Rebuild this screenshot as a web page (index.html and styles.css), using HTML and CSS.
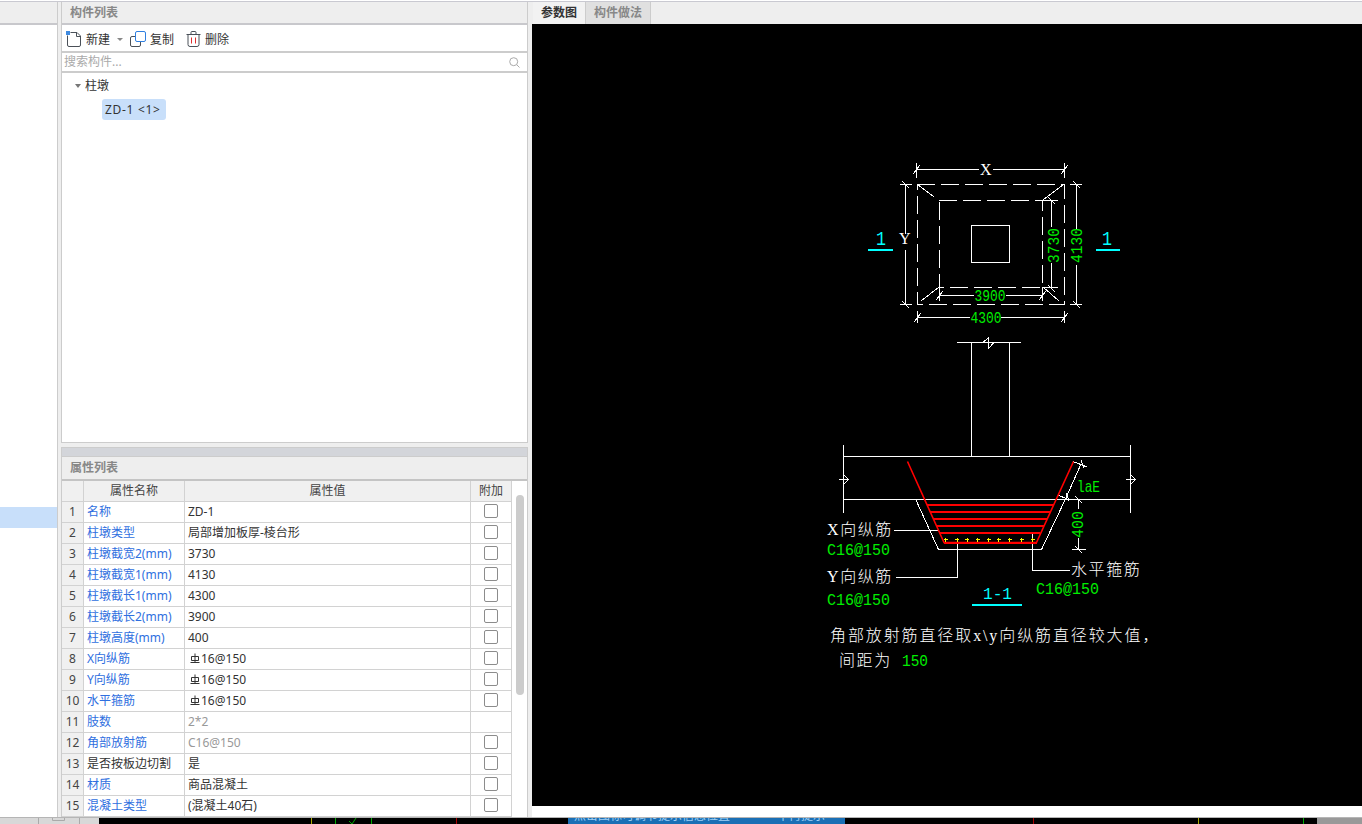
FILE: index.html
```html
<!DOCTYPE html>
<html lang="zh-CN">
<head>
<meta charset="utf-8">
<title>构件列表</title>
<link rel="stylesheet" href="styles.css">
</head>
<body>
<div class="main">
  <aside class="side">
    <div class="side-head"></div>
    <div class="side-body"><div class="side-sel"></div></div>
  </aside>
  <section class="center">
    <div class="list-panel">
      <div class="title">构件列表</div>
      <div class="toolbar">
        <svg class="ico" width="16" height="16" viewBox="0 0 16 16"><path class="ln" d="M1.5 4.5V14a1.5 1.5 0 0 0 1.5 1.5h10a1.5 1.5 0 0 0 1.5-1.5V5L11 1.5H4.5"/><path class="ln" d="M10.5 1.5V5.5H14.5"/><rect class="bl" x="0" y="0" width="4" height="4"/></svg>
        <span class="tool-label">新建</span>
        <span class="caret"></span>
        <svg class="ico copy-ico" width="16" height="16" viewBox="0 0 16 16"><path class="ln" d="M5 5.500H2a1.500 1.500 0 0 0-1.500 1.500v7A1.500 1.500 0 0 0 2 15.500h7a1.500 1.500 0 0 0 1.500-1.500v-3"/><rect class="blue-ln" x="5.500" y="0.500" width="10" height="10" rx="1.500"/></svg>
        <span class="tool-label">复制</span>
        <svg class="ico trash-ico" width="15" height="16" viewBox="0 0 15 16"><path class="ln" d="M0.500 3.500H14.500M5 3.500V1.500a1 1 0 0 1 1-1h3a1 1 0 0 1 1 1v2M2 3.500V13.500a2 2 0 0 0 2 2h7a2 2 0 0 0 2-2V3.500"/><path class="red-ln" d="M5.500 6.500V12.500M9.500 6.500V12.500"/></svg>
        <span class="tool-label">删除</span>
      </div>
      <div class="search">
        <span class="placeholder">搜索构件...</span>
        <svg width="11" height="11" viewBox="0 0 11 11"><circle class="sr" cx="4.700" cy="4.700" r="4"/><path class="sr" d="M7.700 7.700L10.500 10.500"/></svg>
      </div>
      <div class="tree">
        <div class="tree-root"><span class="tree-caret"></span>柱墩</div>
        <div class="tree-item"><span class="chip">ZD-1 &lt;1&gt;</span></div>
      </div>
    </div>
    <div class="divider"></div>
    <div class="prop-panel">
      <div class="title">属性列表</div>
      <div class="prop-body">
        <table class="props">
          <colgroup><col class="c-n"><col class="c-name"><col class="c-val"><col class="c-add"></colgroup>
          <thead><tr><th></th><th>属性名称</th><th>属性值</th><th>附加</th></tr></thead>
          <tbody>
            <tr><td class="n">1</td><td class="k">名称</td><td>ZD-1</td><td class="a"><span class="cb"></span></td></tr>
            <tr><td class="n">2</td><td class="k">柱墩类型</td><td>局部增加板厚-棱台形</td><td class="a"><span class="cb"></span></td></tr>
            <tr><td class="n">3</td><td class="k">柱墩截宽2(mm)</td><td>3730</td><td class="a"><span class="cb"></span></td></tr>
            <tr><td class="n">4</td><td class="k">柱墩截宽1(mm)</td><td>4130</td><td class="a"><span class="cb"></span></td></tr>
            <tr><td class="n">5</td><td class="k">柱墩截长1(mm)</td><td>4300</td><td class="a"><span class="cb"></span></td></tr>
            <tr><td class="n">6</td><td class="k">柱墩截长2(mm)</td><td>3900</td><td class="a"><span class="cb"></span></td></tr>
            <tr><td class="n">7</td><td class="k">柱墩高度(mm)</td><td>400</td><td class="a"><span class="cb"></span></td></tr>
            <tr><td class="n">8</td><td class="k">X向纵筋</td><td><svg class="rebar" width="10" height="11" viewBox="0 0 10 11"><path class="rb" d="M1.500 3.500H8.500V7.500H1.500ZM5 0.500V9.500M0.500 9.500H9.500"/></svg>16@150</td><td class="a"><span class="cb"></span></td></tr>
            <tr><td class="n">9</td><td class="k">Y向纵筋</td><td><svg class="rebar" width="10" height="11" viewBox="0 0 10 11"><path class="rb" d="M1.500 3.500H8.500V7.500H1.500ZM5 0.500V9.500M0.500 9.500H9.500"/></svg>16@150</td><td class="a"><span class="cb"></span></td></tr>
            <tr><td class="n">10</td><td class="k">水平箍筋</td><td><svg class="rebar" width="10" height="11" viewBox="0 0 10 11"><path class="rb" d="M1.500 3.500H8.500V7.500H1.500ZM5 0.500V9.500M0.500 9.500H9.500"/></svg>16@150</td><td class="a"><span class="cb"></span></td></tr>
            <tr><td class="n">11</td><td class="k">肢数</td><td class="muted">2*2</td><td class="a"></td></tr>
            <tr><td class="n">12</td><td class="k">角部放射筋</td><td class="muted">C16@150</td><td class="a"><span class="cb"></span></td></tr>
            <tr><td class="n">13</td><td class="k plain">是否按板边切割</td><td>是</td><td class="a"><span class="cb"></span></td></tr>
            <tr><td class="n">14</td><td class="k">材质</td><td>商品混凝土</td><td class="a"><span class="cb"></span></td></tr>
            <tr><td class="n">15</td><td class="k">混凝土类型</td><td>(混凝土40石)</td><td class="a"><span class="cb"></span></td></tr>
          </tbody>
        </table>
        <div class="scroll"><div class="thumb"></div></div>
      </div>
    </div>
  </section>
  <section class="right">
    <div class="tabs"><span class="tab active">参数图</span><span class="tab">构件做法</span></div>
    <svg class="canvas" width="830" height="782" viewBox="532 24 830 782">
      <g class="w">
        <path class="dash" d="M917 184H1064V304H917Z"/>
        <path class="dash" d="M939 200H1042V287H939Z"/>
        <rect x="971.500" y="225.500" width="38" height="37"/>
        <path d="M917 184L934 197M1063 185L1043 200M921 301L939 287M1043 287L1059 301"/>
        <path d="M917 169.500H979M993 169.500H1064M916.500 163V178M1064.500 163V178M913 174L920 165M1061 174L1068 165"/>
        <path d="M905.500 184V234M905.500 250V304M900 184.500H912M900 304.500H912M902 181L909 188M902 301L909 308"/>
        <path d="M1051.500 200V227M1051.500 263V288M1042 200.500H1058M1042 287.500H1058M1048 197L1055 204M1048 285L1055 292"/>
        <path d="M1076.500 184V229M1076.500 265V304M1070 184.500H1082M1070 304.500H1082M1073 181L1080 188M1073 301L1080 308"/>
        <path d="M939 295.500H974M1006 295.500H1042M939.500 288V301M1042.500 288V301M936 300L943 291M1039 300L1046 291"/>
        <path d="M917 317.500H970M1001 317.500H1064M917.500 311V323M1064.500 311V323M914 322L921 313M1061 322L1068 313"/>
        <path d="M971.500 342V456M1009.500 342V456M957 342.500H1021M983 342.500L988.500 337.500V348.500L994 342.500"/>
        <path d="M843.500 445V513M1130.500 445V513M843 456.500H1131M843 499.500H1131"/>
        <path d="M839 479.500H848.500L844 484M844 475L848.500 479.500M1126 479.500H1135.500L1131 484M1131 475L1135.500 479.500"/>
        <path d="M915.500 499L938.500 549.500H1041.500L1065.500 499L1081 464"/>
        <path d="M1073 461.500L1077 463L1087 467M1081 460L1084 468M1058 495L1067 499M1066 493L1069 501"/>
        <path d="M1078.500 499V509M1078.500 538V549M1072 499.500H1086M1072 549.500H1086M1075 496L1082 503M1075 546L1082 553"/>
        <path d="M894 530.500H939M896 577.500H957.500V539M1032.500 533V570.500H1070"/>
      </g>
      <path class="red" d="M907.500 461.500L944 542.500H1036.500L1073.500 461.500"/>
      <path class="red thick" d="M926.500 505H1054M930 512H1050M933.500 519H1046.500M936.500 526H1043.500M940 533H1040M944 542.500H1036.500"/>
      <path class="yel" d="M943.500 539.500h4M945.500 537.500v4M955 539.500h4M957 537.500v4M965 539.500h4M967 537.500v4M975.500 539.500h4M977.500 537.500v4M986.500 539.500h4M988.500 537.500v4M996.500 539.500h4M998.500 537.500v4M1007.500 539.500h4M1009.500 537.500v4M1019.500 539.500h4M1021.500 537.500v4M1030.500 539.500h4M1032.500 537.500v4"/>
      <path class="cy" d="M868 249.500H893M1096 249.500H1120M972 605H1022"/>
      <text class="serif white" x="980" y="175">X</text>
      <text class="serif white" x="899" y="244">Y</text>
      <text class="mono green" x="974.500" y="301" textLength="31" lengthAdjust="spacingAndGlyphs">3900</text>
      <text class="mono green" x="970.500" y="323" textLength="31" lengthAdjust="spacingAndGlyphs">4300</text>
      <text class="mono green rot-a" textLength="35" lengthAdjust="spacingAndGlyphs">3730</text>
      <text class="mono green rot-b" textLength="35" lengthAdjust="spacingAndGlyphs">4130</text>
      <text class="mono green rot-c" textLength="27" lengthAdjust="spacingAndGlyphs">400</text>
      <text class="big cyan" x="876" y="245" textLength="10" lengthAdjust="spacingAndGlyphs">1</text>
      <text class="big cyan" x="1102" y="245" textLength="10" lengthAdjust="spacingAndGlyphs">1</text>
      <text class="mono cyan" x="983" y="599" textLength="29" lengthAdjust="spacingAndGlyphs">1-1</text>
      <text class="mono green" x="1077" y="492" textLength="23" lengthAdjust="spacingAndGlyphs">laE</text>
      <text class="cad white" x="827" y="535">X向纵筋</text>
      <text class="mono green" x="827" y="555" textLength="63" lengthAdjust="spacingAndGlyphs">C16@150</text>
      <text class="cad white" x="827" y="582">Y向纵筋</text>
      <text class="mono green" x="827" y="605" textLength="63" lengthAdjust="spacingAndGlyphs">C16@150</text>
      <text class="cad white" x="1071" y="575">水平箍筋</text>
      <text class="mono green" x="1036" y="594" textLength="63" lengthAdjust="spacingAndGlyphs">C16@150</text>
      <text class="cad white" x="830" y="641" textLength="330">角部放射筋直径取x\y向纵筋直径较大值，</text>
      <text class="cad white" x="839" y="666">间距为</text>
      <text class="mono green" x="902" y="666" textLength="26" lengthAdjust="spacingAndGlyphs">150</text>
    </svg>
    <div class="right-foot"></div>
  </section>
</div>
<svg class="strip" width="1362" height="6" viewBox="0 0 1362 6">
  <rect class="s-bg" x="0" y="0" width="1362" height="6"/>
  <rect class="s-gray" x="0" y="0" width="99" height="6"/>
  <path class="s-sep" d="M38.500 0V6M79.500 0V6M52.500 0V2.500H64.500V0"/>
  <path class="s-yel" d="M311.500 0V6M1198.500 0V6"/>
  <path class="s-grn" d="M335.500 0V6M371.500 0V6M1303.500 0V6M349 3L352 6L356 0"/>
  <path class="s-red" d="M456.500 0V6M1033.500 0V6"/>
  <rect class="s-blue" x="568" y="0" width="277" height="6"/>
  <text class="s-text" x="574" y="2">点击图标可调节提示信息位置~</text>
  <text class="s-text" x="777" y="2">不再提示</text>
  <rect class="s-gray2" x="1317" y="0" width="45" height="6"/>
</svg>
</body>
</html>
```
FILE: styles.css
```css
* { box-sizing: border-box; }
html, body { margin: 0; padding: 0; }
body {
  width: 1362px;
  height: 824px;
  overflow: hidden;
  background: #fff;
  padding-top: 1px;
  font: 12px/1.2 "Noto Sans", "Noto Sans CJK SC", sans-serif;
  color: #333;
}
.main {
  display: flex;
  height: 817px;
  background: #eee;
  border-top: 1px solid #c9c9d1;
  border-bottom: 1px solid #b5b5b5;
}
.side {
  width: 58px;
  display: flex;
  flex-direction: column;
  border-right: 1px solid #ccc;
  margin-right: 3px;
}
.side-head { background: #eee; border-bottom: 2px solid #c8c8cc; height: 23px; }
.side-body { flex: 1; background: #fff; padding-top: 482px; }
.side-sel { height: 21px; background: #c8dffa; }
.center { width: 467px; display: flex; flex-direction: column; margin-right: 4px; }
.title {
  height: 23px;
  padding-left: 8px;
  background: #eee;
  border-bottom: 2px solid #c8c8cc;
  color: #888;
  font-weight: 700;
  line-height: 22px;
}
.list-panel {
  height: 441px;
  display: flex;
  flex-direction: column;
  border: 1px solid #ccc;
  border-top: 0;
}
.toolbar {
  height: 28px;
  flex: none;
  display: flex;
  align-items: center;
  padding: 2px 0 0 4px;
  background: #fff;
  border-bottom: 2px solid #ccc;
  color: #333;
}
.ico { flex: none; }
.tool-label { margin-left: 4px; padding-top: 2px; }
.caret {
  width: 0; height: 0;
  margin-left: 7px;
  border: 3px solid transparent;
  border-top: 3px solid #888;
  border-bottom: 0;
}
.copy-ico { margin-left: 7px; }
.trash-ico { margin-left: 12px; }
.ln { fill: none; stroke: #4a5058; stroke-width: 1; }
.bl { fill: #3f8ae0; }
.blue-ln { fill: #fff; stroke: #2f7fe0; stroke-width: 1; }
.red-ln { fill: none; stroke: #e03030; stroke-width: 1; }
.search {
  height: 20px;
  flex: none;
  display: flex;
  align-items: center;
  justify-content: space-between;
  padding: 0 7px 0 2px;
  background: #fff;
  border-bottom: 2px solid #ccc;
}
.placeholder { color: #aaa; }
.sr { fill: none; stroke: #aaa; stroke-width: 1; }
.tree { flex: 1; background: #fff; }
.tree-root {
  display: flex;
  align-items: center;
  height: 26px;
  padding-left: 13px;
  color: #333;
}
.tree-caret {
  width: 0; height: 0;
  margin-right: 4px;
  border: 3.500px solid transparent;
  border-top: 4px solid #777;
  border-bottom: 0;
}
.tree-item { padding-left: 40px; }
.chip {
  display: inline-block;
  height: 21px;
  width: 64px;
  padding-left: 3px;
  line-height: 21px;
  letter-spacing: 0.700px;
  background: #c8dffa;
  border-radius: 3px;
  white-space: pre;
}
.divider {
  flex: none;
  margin-top: 4px;
  background: #d3d5da;
  border: 1px solid #ccc;
  height: 10px;
}
.prop-panel {
  flex: 1;
  display: flex;
  flex-direction: column;
  border: 1px solid #ccc;
  border-width: 0 1px;
}
.prop-panel .title { height: 24px; line-height: 22px; border-bottom-color: #c4c4c4; }
.prop-body { flex: 1; display: flex; background: #fff; }
.props {
  width: 450px;
  flex: none;
  table-layout: fixed;
  border-collapse: separate;
  border-spacing: 0;
}
.c-n { width: 22px; }
.c-name { width: 101px; }
.c-val { width: 286px; }
.c-add { width: 41px; }
.props th, .props td {
  height: 21px;
  padding: 0;
  border-right: 1px solid #d2d2d2;
  border-bottom: 1px solid #d2d2d2;
  font-size: 12px;
  line-height: 20px;
  white-space: nowrap;
  overflow: hidden;
}
.props th { background: #f0f0f0; font-weight: 400; color: #444; text-align: center; }
.props td { padding-left: 3px; color: #333; }
.props td.n { background: #f0f0f0; padding: 0; text-align: center; color: #444; }
.props td.k { padding-left: 3px; color: #2f6fe0; }
.props td.k.plain { color: #333; }
.props td.muted { color: #999; }
.props td.a { padding: 0; text-align: center; }
.cb {
  display: inline-block;
  width: 14px;
  height: 14px;
  margin-top: 2px;
  vertical-align: top;
  background: #fff;
  border: 1px solid #8c8c8c;
  border-radius: 2px;
}
.rebar { margin: 0 1px 0 2px; vertical-align: -1px; }
.rb { fill: none; stroke: #333; stroke-width: 1; }
.scroll { flex: 1; padding: 14px 0 0 4px; }
.thumb { width: 8px; height: 200px; background: #ccc; border-radius: 4px; }
.right { flex: 1; display: flex; flex-direction: column; min-width: 0; }
.tabs { height: 22px; display: flex; background: #eee; padding-left: 1px; }
.tab {
  width: 53px;
  background: #e0e0e0;
  border-right: 1px solid #ccc;
  color: #888;
  font-weight: 700;
  text-align: center;
  line-height: 22px;
}
.tab + .tab { width: 65px; }
.tab.active { background: #f2f2f2; color: #333; }
.canvas { display: block; flex: none; background: #000; }
.right-foot { flex: 1; background: #fff; }
.w { fill: none; stroke: #fff; stroke-width: 1; shape-rendering: crispEdges; }
.dash { stroke-dasharray: 18 6; }
.red { fill: none; stroke: #f00; stroke-width: 1.600; }
.thick { stroke-width: 2; shape-rendering: crispEdges; }
.yel { fill: none; stroke: #ff0; stroke-width: 1; shape-rendering: crispEdges; }
.cy { fill: none; stroke: #0ff; stroke-width: 2; shape-rendering: crispEdges; }
.mono { font: 17px "Liberation Mono", monospace; }
.big { font: 20px "Liberation Mono", monospace; }
.serif { font: 16px "Liberation Serif", serif; }
.cad { font: 300 16px "Liberation Serif", "Noto Sans CJK SC", serif; letter-spacing: 1.600px; }
.white { fill: #fff; }
.green { fill: #0e0; }
.cyan { fill: #0ff; }
.rot-a { transform: translate(1059px, 263px) rotate(-90deg); }
.rot-b { transform: translate(1082px, 263px) rotate(-90deg); }
.rot-c { transform: translate(1083px, 538px) rotate(-90deg); }
.strip { display: block; }
.s-bg { fill: #000; }
.s-gray { fill: #d8d8d8; }
.s-sep { fill: none; stroke: #aaa; stroke-width: 1; }
.s-yel { fill: none; stroke: #aa0; stroke-width: 1; }
.s-grn { fill: none; stroke: #0a0; stroke-width: 1; }
.s-red { fill: none; stroke: #a00; stroke-width: 1; }
.s-blue { fill: #1a6fb5; }
.s-text { font: 12px "Noto Sans CJK SC", sans-serif; fill: #9fd0f5; }
.s-gray2 { fill: #999; }
```
